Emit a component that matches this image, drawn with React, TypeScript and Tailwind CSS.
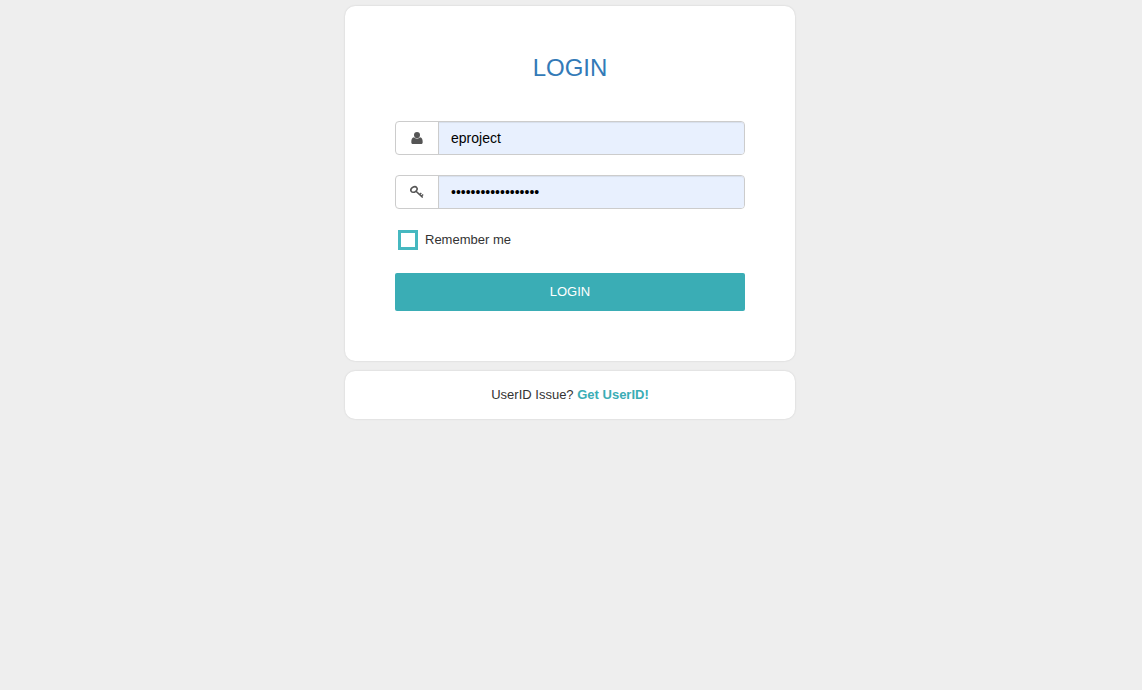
import { useState } from "react";
import type { ReactNode } from "react";

function UserIcon() {
  return (
    <svg viewBox="0 0 14 14" className="size-[14px] fill-current" aria-hidden="true">
      <ellipse cx="7" cy="4" rx="3" ry="3.1" />
      <path d="M4 6.200C2 6.500 1.300 8.500 1.300 11.200C1.300 12.500 2.100 13.100 3.200 13.100H10.800C11.900 13.100 12.700 12.500 12.700 11.200C12.700 8.500 12 6.500 10 6.200C9.200 7.100 8.200 7.500 7 7.500C5.800 7.500 4.800 7.100 4 6.200Z" />
    </svg>
  );
}

function KeyIcon() {
  return (
    <svg viewBox="0 0 14 14" className="size-[14px]" fill="none" stroke="currentColor" aria-hidden="true">
      <ellipse cx="4" cy="4.500" rx="3.300" ry="2.500" strokeWidth="1.600" transform="rotate(-35 4 4.500)" />
      <path d="M6.300 6.500L12.200 12" strokeWidth="1.700" strokeLinecap="round" />
      <path d="M9.700 9.500L11.300 7.900M11.400 11L13.200 9.500" strokeWidth="1.400" />
    </svg>
  );
}

type FieldProps = {
  id: string;
  label: string;
  type: string;
  value: string;
  onChange: (value: string) => void;
  icon: ReactNode;
};

function Field({ id, label, type, value, onChange, icon }: FieldProps) {
  return (
    <div className="flex h-[34px] rounded border border-[#cccccc] bg-white">
      <label
        htmlFor={id}
        aria-label={label}
        className="flex w-[43px] items-center justify-center border-r border-[#cccccc] text-[#555555]"
      >
        {icon}
      </label>
      <input
        id={id}
        type={type}
        value={value}
        onChange={(event) => onChange(event.target.value)}
        className="min-w-0 flex-1 rounded-r-[3px] bg-[#e8f0fe] px-3 text-sm text-black shadow-[inset_0_1px_1px_rgba(0,0,0,0.075)] outline-none"
      />
    </div>
  );
}

export default function App() {
  const [user, setUser] = useState("eproject");
  const [password, setPassword] = useState("abcdefghijklmnopqr");

  return (
    <main className="flex min-h-screen flex-col items-center gap-2.5 bg-[#eeeeee] py-1.5 pr-0.5 font-['Liberation_Sans',Arial,sans-serif] text-[13px] leading-5 text-[#333333]">
      <form
        onSubmit={(event) => event.preventDefault()}
        className="flex w-full max-w-[450px] flex-col rounded-[10px] bg-white px-[50px] pt-12 pb-[50px] shadow-[0_0_2px_rgba(0,0,0,0.15)]"
      >
        <h1 className="text-center text-2xl leading-7 text-[#337ab7]">LOGIN</h1>
        <div className="mt-[39px] flex flex-col gap-5">
          <Field id="user" label="User ID" type="text" value={user} onChange={setUser} icon={<UserIcon />} />
          <Field
            id="password"
            label="Password"
            type="password"
            value={password}
            onChange={setPassword}
            icon={<KeyIcon />}
          />
        </div>
        <label className="mt-[21px] flex items-center gap-[7px] pl-[3px]">
          <input
            type="checkbox"
            className="size-5 appearance-none border-3 border-[#46b8c0] bg-white checked:bg-[#46b8c0]"
          />
          Remember me
        </label>
        <button type="submit" className="mt-[23px] h-[38px] rounded-[2px] bg-[#3aadb5] text-white">
          LOGIN
        </button>
      </form>
      <section className="w-full max-w-[450px] rounded-[10px] bg-white py-3.5 text-center shadow-[0_0_2px_rgba(0,0,0,0.15)]">
        UserID Issue?{" "}
        <a href="#get-userid" className="font-bold text-[#3aadb5]">
          Get UserID!
        </a>
      </section>
    </main>
  );
}
